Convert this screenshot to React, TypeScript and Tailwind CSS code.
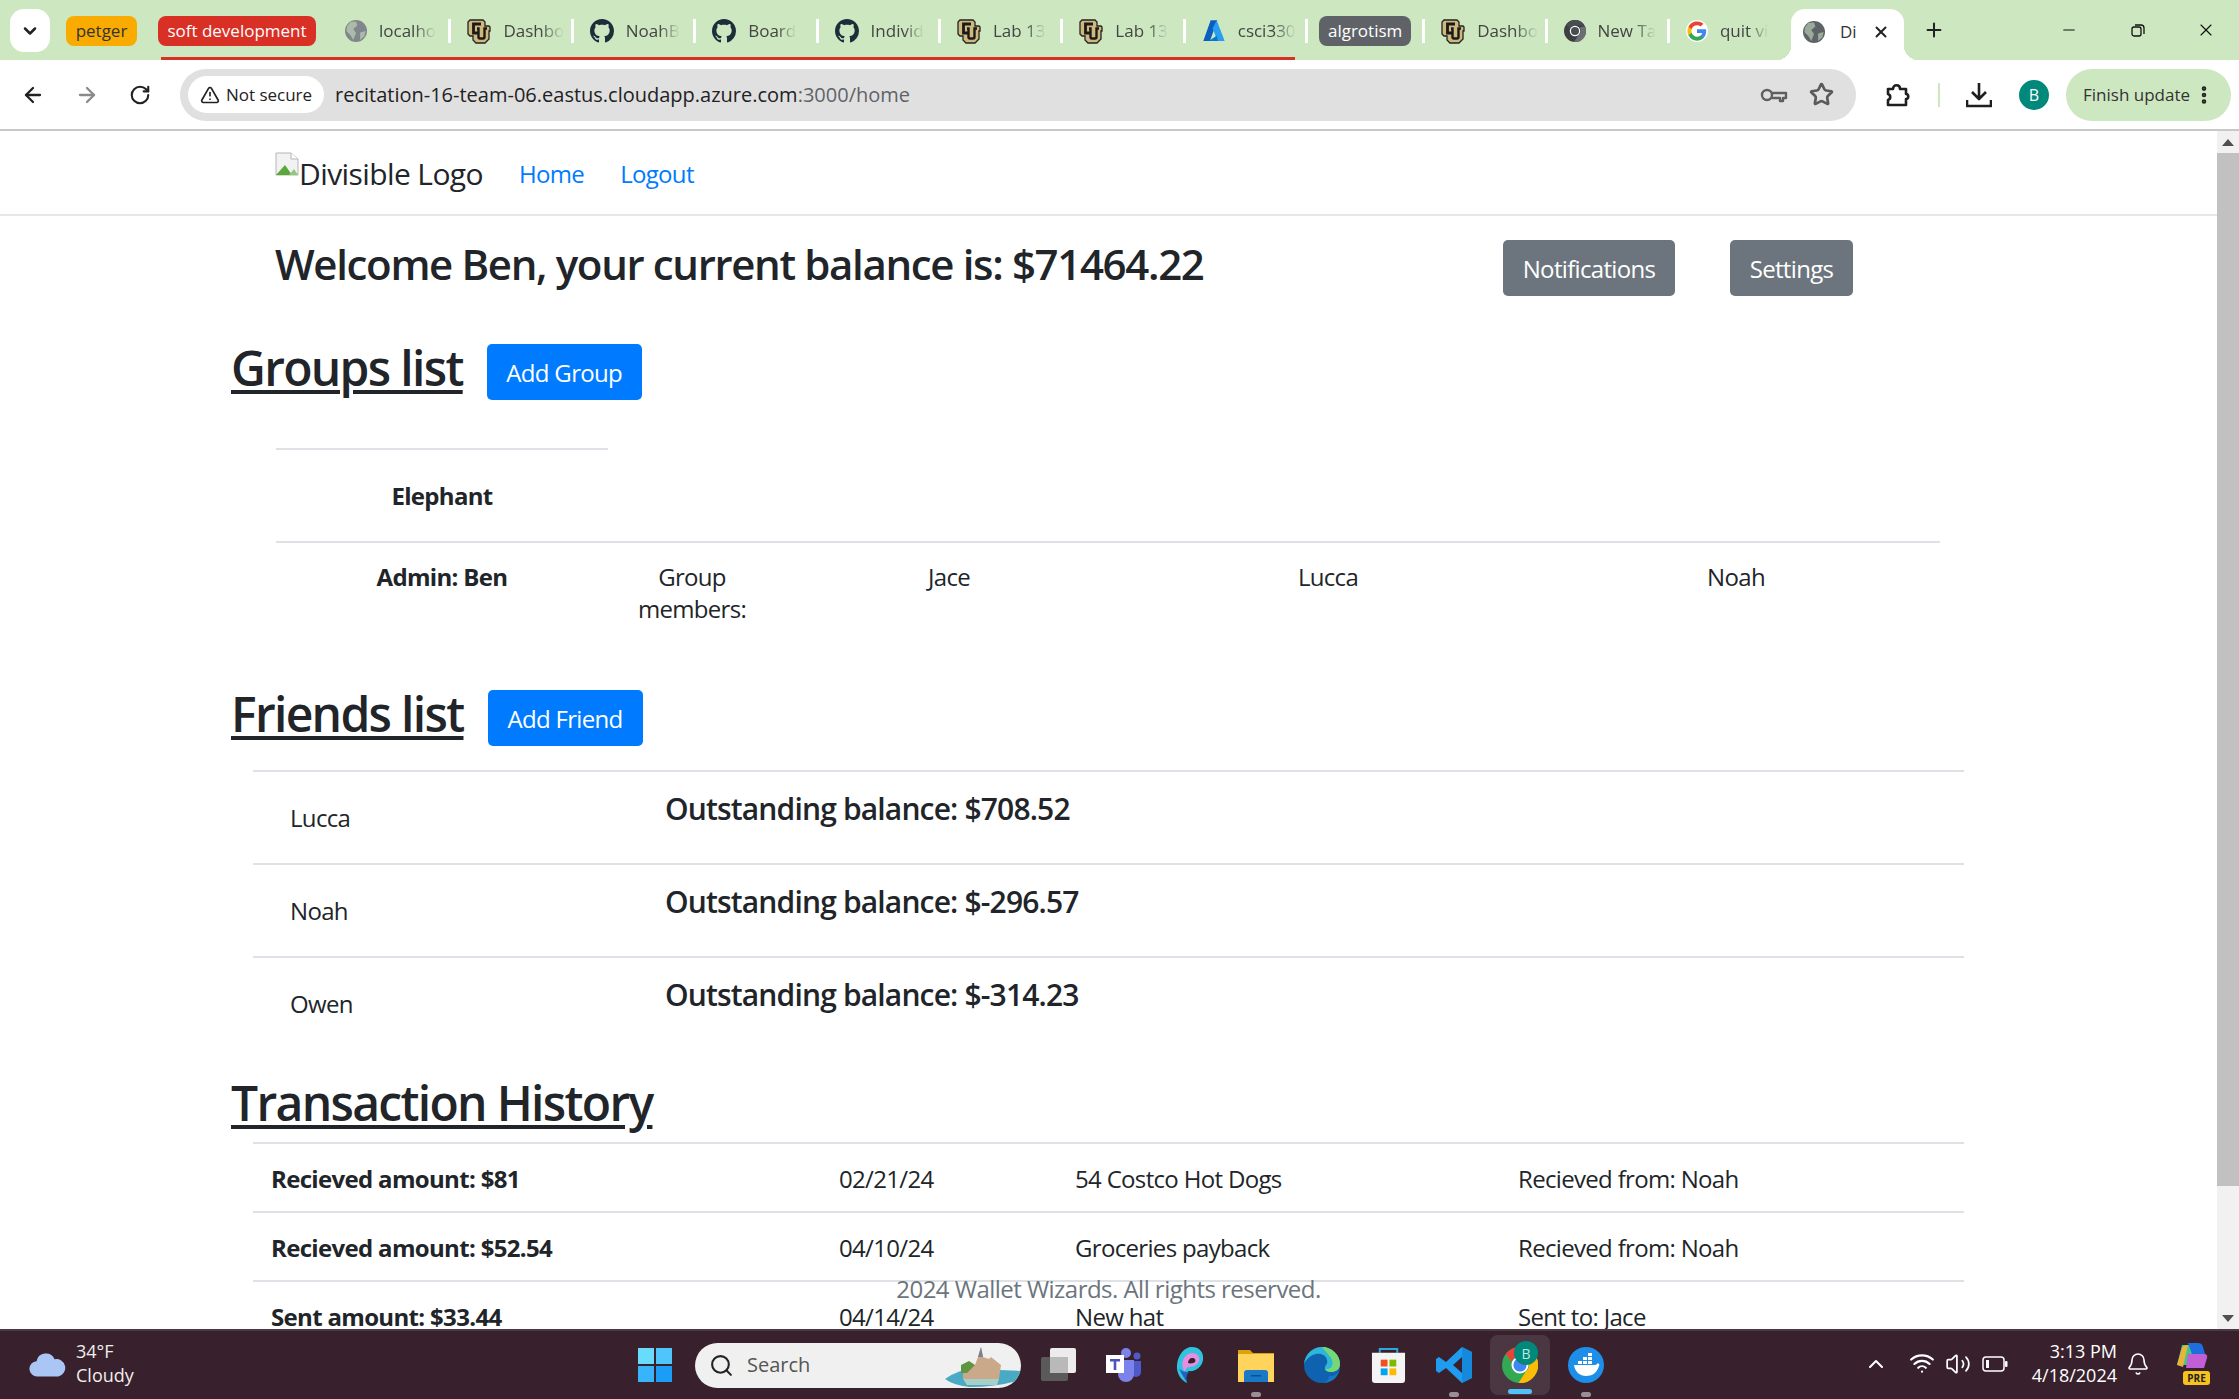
import React from 'react';
import { ArrowLeft, ArrowRight, RotateCw, TriangleAlert, Star, EllipsisVertical, ChevronDown, Plus, X, Minus, Search, ChevronUp, Wifi, Volume2, Bell } from 'lucide-react';

const FONT = 'font-["Open_Sans",sans-serif]';

function Globe({ color = '#5f6368' }: { color?: string }) {
  return (
    <svg viewBox="0 0 16 16" className="w-[22px] h-[22px] shrink-0">
      <circle cx="8" cy="8" r="8" fill={color} />
      <path d="M4 1.5 L8 1 L9 4 L6 6.5 L8 9.5 L6 14.5 L4 11 L1 8 L1.5 4.5 Z M11 9 L15 8 L14 12 L11 14.5 Z" fill="#cde8c1" opacity="0.55" />
    </svg>
  );
}

function Cu() {
  return (
    <svg viewBox="0 0 24 26" className="w-[24px] h-[26px] shrink-0">
      <path d="M3 2h13l2 2v4h4l1 1v4h-1v8l-4 4H9l-3-3v-4H3l-2-2V4z" fill="#cfb87c" stroke="#222" strokeWidth="1.3" />
      <path d="M14 6H6.500v9H12" fill="none" stroke="#1a1a1a" strokeWidth="2.800" />
      <path d="M10 10.500h1.500V19a1.500 1.500 0 0 0 1.500 1.500h3a1.500 1.500 0 0 0 1.500-1.500V10.500H20" fill="none" stroke="#1a1a1a" strokeWidth="2.400" />
    </svg>
  );
}

function GitHub() {
  return (
    <svg viewBox="0 0 16 16" className="w-[24px] h-[24px] shrink-0" fill="#1f2d3a">
      <path d="M8 0C3.58 0 0 3.58 0 8c0 3.54 2.29 6.53 5.47 7.59.4.07.55-.17.55-.38 0-.19-.01-.82-.01-1.49-2.01.37-2.53-.49-2.69-.94-.09-.23-.48-.94-.82-1.13-.28-.15-.68-.52-.01-.53.63-.01 1.08.58 1.23.82.72 1.21 1.87.87 2.33.66.07-.52.28-.87.51-1.07-1.78-.2-3.64-.89-3.64-3.95 0-.87.31-1.59.82-2.15-.08-.2-.36-1.02.08-2.12 0 0 .67-.21 2.2.82.64-.18 1.32-.27 2-.27s1.36.09 2 .27c1.53-1.04 2.2-.82 2.2-.82.44 1.1.16 1.92.08 2.12.51.56.82 1.27.82 2.15 0 3.07-1.87 3.75-3.65 3.95.29.25.54.73.54 1.48 0 1.07-.01 1.93-.01 2.2 0 .21.15.46.55.38A8.01 8.01 0 0 0 16 8c0-4.42-3.58-8-8-8z" />
    </svg>
  );
}

function AzureIcon() {
  return (
    <svg viewBox="0 0 18 18" className="w-[24px] h-[24px] shrink-0">
      <path d="M6.5 1h5L6 16.5H1z" fill="#0a5ebd" />
      <path d="M11 1l6 15.5h-5.5L8 7z" fill="#2b9df0" />
      <path d="M5 16.5l6-4 1 4z" fill="#0078d4" />
    </svg>
  );
}

function ChromeIcon({ size = 22, dark = false }: { size?: number; dark?: boolean }) {
  const a = dark ? '#4a4d50' : '#ea4335';
  const b = dark ? '#3c4043' : '#34a853';
  const c = dark ? '#6b6f73' : '#fbbc05';
  return (
    <svg viewBox="0 0 24 24" width={size} height={size} className="shrink-0">
      <circle cx="12" cy="12" r="12" fill={b} />
      <path d="M12 0a12 12 0 0 1 10.4 6H12a6 6 0 0 0-5.6 3.8L2.5 4.7A12 12 0 0 1 12 0z" fill={a} />
      <path d="M23 7A12 12 0 0 1 11 24l5-7.8A6 6 0 0 0 17 8z" fill={c} />
      <circle cx="12" cy="12" r="5.7" fill="#fff" />
      <circle cx="12" cy="12" r="4.4" fill={dark ? '#4a4d50' : '#4285f4'} />
    </svg>
  );
}

function GoogleIcon() {
  return (
    <svg viewBox="0 0 24 24" className="w-[22px] h-[22px] shrink-0">
      <circle cx="12" cy="12" r="12" fill="#fff" />
      <path d="M22 12.2c0-.7-.1-1.4-.2-2H12v3.9h5.6a4.8 4.8 0 0 1-2.1 3.1v2.6h3.4c2-1.8 3.1-4.5 3.1-7.6z" fill="#4285f4" />
      <path d="M12 22.5c2.8 0 5.2-.9 6.9-2.6l-3.4-2.6c-.9.6-2.1 1-3.5 1-2.7 0-5-1.8-5.8-4.3H2.7v2.7a10.5 10.5 0 0 0 9.3 5.8z" fill="#34a853" />
      <path d="M6.2 14a6.3 6.3 0 0 1 0-4V7.3H2.7a10.5 10.5 0 0 0 0 9.4z" fill="#fbbc05" />
      <path d="M12 5.7c1.5 0 2.9.5 4 1.5l3-3A10.5 10.5 0 0 0 2.7 7.3L6.2 10c.8-2.5 3.1-4.3 5.8-4.3z" fill="#ea4335" />
    </svg>
  );
}

function Tab({ icon, label, sep = true }: { icon: React.ReactNode; label: string; sep?: boolean }) {
  return (
    <div className="w-[122.4px] h-[31px] flex items-center pl-[16px] shrink-0 relative">
      {icon}
      <span className="ml-[12px] w-fit text-[17px] text-[#444] whitespace-nowrap [mask-image:linear-gradient(to_right,black_62%,transparent)]">{label}</span>
      {sep && <div className="absolute right-0 top-[4px] w-[3px] h-[24px] bg-white" />}
    </div>
  );
}

function Pill({ color, text, w }: { color: string; text: string; w: string }) {
  return (
    <div className={`h-[30px] ${w} ${color} rounded-[8px] text-[17px] flex items-center justify-center whitespace-nowrap shrink-0`}>
      {text}
    </div>
  );
}

function TitleBar() {
  return (
    <div className="h-[60px] bg-[#cde8c1] flex items-start shrink-0 relative">
      <div className="ml-[10px] mt-[9px] w-[40px] h-[43px] bg-white rounded-[14px] flex items-center justify-center shrink-0">
        <ChevronDown className="w-[20px] h-[20px] text-[#222]" strokeWidth={3} />
      </div>
      <div className="flex items-center mt-[15px] ml-[16px]">
        <Pill color="bg-[#f9ab00] text-[#333]" text="petger" w="w-[71px]" />
        <div className="w-[21px]" />
        <Pill color="bg-[#d93025] text-white" text="soft development" w="w-[158px]" />
        <div className="w-[13px]" />
        <Tab icon={<Globe color="#80868b" />} label="localho" />
        <Tab icon={<Cu />} label="Dashbo" />
        <Tab icon={<GitHub />} label="NoahB" />
        <Tab icon={<GitHub />} label="Board" />
        <Tab icon={<GitHub />} label="Individ" />
        <Tab icon={<Cu />} label="Lab 13" />
        <Tab icon={<Cu />} label="Lab 13" />
        <Tab icon={<AzureIcon />} label="csci330" />
        <div className="w-[11px]" />
        <Pill color="bg-[#5f6368] text-white" text="algrotism" w="w-[92px]" />
        <div className="w-[11px]" />
        <div className="w-[3px] h-[24px] bg-white" />
        <Tab icon={<Cu />} label="Dashbo" />
        <Tab icon={<ChromeIcon dark />} label="New Ta" />
        <Tab icon={<GoogleIcon />} label="quit vi" sep={false} />
      </div>
      <div className="absolute left-[1791px] top-[9px] w-[113px] h-[51px] bg-white rounded-t-[14px] flex items-center pl-[12px] pb-[6px]">
        <Globe />
        <span className="ml-[15px] text-[17px] text-[#333] w-[24px]">Di</span>
        <X className="w-[18px] h-[18px] text-[#222] ml-[8px]" strokeWidth={2.6} />
      </div>
      <div className="absolute left-[1777px] top-[46px] w-[14px] h-[14px] bg-[radial-gradient(circle_at_0_0,transparent_14px,white_14px)]" />
      <div className="absolute left-[1904px] top-[46px] w-[14px] h-[14px] bg-[radial-gradient(circle_at_100%_0,transparent_14px,white_14px)]" />
      <Plus className="absolute left-[1923px] top-[19px] w-[22px] h-[22px] text-[#222]" strokeWidth={2.2} />
      <Minus className="absolute left-[2060px] top-[21px] w-[18px] h-[18px] text-[#111]" strokeWidth={1.5} />
      <svg viewBox="0 0 16 16" className="absolute left-[2130px] top-[22px] w-[16px] h-[16px]" fill="none" stroke="#111" strokeWidth="1.3">
        <rect x="2" y="5" width="9" height="9" rx="2" />
        <path d="M5 3h6a3 3 0 0 1 3 3v6" />
      </svg>
      <X className="absolute left-[2196px] top-[20px] w-[20px] h-[20px] text-[#111]" strokeWidth={1.4} />
      <div className="absolute left-[161px] top-[57px] w-[1134px] h-[3px] bg-[#d93025]" />
    </div>
  );
}

function ToolBar() {
  return (
    <div className="h-[69px] bg-white border-b-2 border-[#c8c8c8] flex items-center shrink-0 box-content">
      <ArrowLeft className="ml-[21px] w-[24px] h-[24px] text-[#222]" strokeWidth={2.3} />
      <ArrowRight className="ml-[30px] w-[24px] h-[24px] text-[#8a8a8a]" strokeWidth={2.3} />
      <RotateCw className="ml-[30px] w-[22px] h-[22px] text-[#222]" strokeWidth={2.3} />
      <div className="ml-[29px] w-[1676px] h-[52px] rounded-full bg-[#e0e0e0] flex items-center pl-[8px] pr-[22px]">
        <div className="h-[37px] w-[136px] bg-white rounded-full flex items-center justify-center gap-[6px]">
          <TriangleAlert className="w-[20px] h-[20px] text-[#222]" strokeWidth={2} />
          <span className="text-[17px] font-medium text-[#222]">Not secure</span>
        </div>
        <span className="ml-[11px] text-[20px] text-[#222] whitespace-nowrap">
          recitation-16-team-06.eastus.cloudapp.azure.com<span className="text-[#5f6368]">:3000/home</span>
        </span>
        <div className="flex-1" />
        <svg viewBox="0 0 28 16" className="w-[28px] h-[16px] shrink-0" fill="none" stroke="#5f5f5f" strokeWidth="2.4">
          <circle cx="7" cy="8" r="5" />
          <path d="M12 6h14v5h-3v3h-3v-3h-8" strokeLinejoin="round" />
        </svg>
        <Star className="ml-[21px] w-[25px] h-[25px] text-[#5a5a5a]" strokeWidth={2.6} />
      </div>
      <svg viewBox="0 0 26 26" className="ml-[29px] w-[26px] h-[26px] shrink-0" fill="none" stroke="#1f1f1f" strokeWidth="2.6" strokeLinejoin="round">
        <path d="M3 7h5c0-5 7-5 7 0h6v5c3 0 3 5 0 5v6H3v-5c3-1 3-5 0-6z" />
      </svg>
      <div className="ml-[27px] w-[2px] h-[24px] bg-[#cde8c1]" />
      <svg viewBox="0 0 26 26" className="ml-[26px] w-[26px] h-[26px] shrink-0" fill="none" stroke="#1f1f1f" strokeWidth="2.6" strokeLinejoin="round">
        <path d="M13 1v15M6 10l7 7 7-7M1 18v6h24v-6" />
      </svg>
      <div className="ml-[27px] w-[30px] h-[30px] rounded-full bg-[#00897b] text-white text-[16px] flex items-center justify-center">B</div>
      <div className="ml-[17px] w-[165px] h-[52px] rounded-full bg-[#cde8c1] flex items-center pl-[17px]">
        <span className="text-[17px] text-[#333] whitespace-nowrap">Finish update</span>
        <EllipsisVertical className="ml-[3px] w-[22px] h-[22px] text-[#222]" strokeWidth={3} />
      </div>
    </div>
  );
}

function PageButton({ text, color, w }: { text: string; color: string; w: string }) {
  return (
    <div className={`h-[56px] ${w} ${color} pt-[2px] rounded-[5px] text-white text-[24px] flex items-center justify-center whitespace-nowrap shrink-0`}>
      {text}
    </div>
  );
}

function SectionTitle({ title, children }: { title: string; children?: React.ReactNode }) {
  return (
    <div className="flex items-center pl-[231px] h-[56px] gap-[24px]">
      <h2 className="pb-[8px] text-[48px] font-semibold tracking-[-0.035em] text-[#212529] underline decoration-[4px] underline-offset-[4px] whitespace-nowrap">{title}</h2>
      {children}
    </div>
  );
}

const friends = [
  { name: 'Lucca', balance: 'Outstanding balance: $708.52' },
  { name: 'Noah', balance: 'Outstanding balance: $-296.57' },
  { name: 'Owen', balance: 'Outstanding balance: $-314.23' },
];

const transactions = [
  { amount: 'Recieved amount: $81', date: '02/21/24', desc: '54 Costco Hot Dogs', who: 'Recieved from: Noah' },
  { amount: 'Recieved amount: $52.54', date: '04/10/24', desc: 'Groceries payback', who: 'Recieved from: Noah' },
  { amount: 'Sent amount: $33.44', date: '04/14/24', desc: 'New hat', who: 'Sent to: Jace' },
];

function PageContent() {
  return (
    <div className="flex-1 relative overflow-hidden bg-white text-[#212529] text-[24px] tracking-[-0.028em]">
      <nav className="h-[85px] border-b-2 border-[#e7e7e7] flex items-center pl-[275px] pt-[2px]">
        <svg viewBox="0 0 24 24" className="w-[24px] h-[24px] -mt-[20px] shrink-0">
          <path d="M1 1h15l7 6v16H1z" fill="#f2f2f2" stroke="#b5b5b5" />
          <path d="M1 23l9-10 7 10z" fill="#5aa83c" />
          <path d="M14 23l5-6 4 6z" fill="#8fc97a" />
          <path d="M16 1v6h7" fill="#fff" stroke="#b5b5b5" />
        </svg>
        <span className="text-[30px] tracking-[-0.02em] whitespace-nowrap">Divisible Logo</span>
        <a className="ml-[36px] text-[#007bff]">Home</a>
        <a className="ml-[36px] text-[#007bff]">Logout</a>
      </nav>
      <div className="flex items-center pl-[275px] mt-[24px]">
        <h3 className="text-[42px] font-semibold tracking-[-0.032em] w-[1228px] whitespace-nowrap -mt-[10px]">Welcome Ben, your current balance is: $71464.22</h3>
        <PageButton text="Notifications" color="bg-[#6c757d]" w="w-[172px]" />
        <div className="w-[55px]" />
        <PageButton text="Settings" color="bg-[#6c757d]" w="w-[123px]" />
      </div>
      <div className="mt-[48px]">
        <SectionTitle title="Groups list">
          <PageButton text="Add Group" color="bg-[#007bff]" w="w-[155px]" />
        </SectionTitle>
      </div>
      <div className="ml-[276px] w-[1664px] mt-[48px]">
        <div className="w-[332px] h-[93px] border-t-2 border-[#dee2e6] flex items-center justify-center font-bold">Elephant</div>
        <div className="h-[149px] border-t-2 border-[#dee2e6] grid grid-cols-[332px_168px_346px_412px_404px] pt-[18px] text-center leading-[32px]">
          <div className="font-bold">Admin: Ben</div>
          <div>Group<br />members:</div>
          <div>Jace</div>
          <div>Lucca</div>
          <div>Noah</div>
        </div>
      </div>
      <SectionTitle title="Friends list">
        <PageButton text="Add Friend" color="bg-[#007bff]" w="w-[155px]" />
      </SectionTitle>
      <div className="ml-[253px] w-[1711px] mt-[24px]">
        {friends.map((f) => (
          <div key={f.name} className="h-[93px] border-t-2 border-[#dee2e6] flex">
            <div className="w-[412px] pl-[37px] pt-[28px]">{f.name}</div>
            <div className="text-[30px] font-semibold tracking-[-0.028em] pt-[14px] whitespace-nowrap">{f.balance}</div>
          </div>
        ))}
      </div>
      <div className="mt-[30px]">
        <SectionTitle title="Transaction History" />
      </div>
      <div className="ml-[253px] w-[1711px] mt-[7px]">
        {transactions.map((t) => (
          <div key={t.amount} className="h-[69px] pt-[2px] border-t-2 border-[#dee2e6] flex items-center whitespace-nowrap">
            <div className="w-[586px] pl-[18px] font-bold">{t.amount}</div>
            <div className="w-[236px]">{t.date}</div>
            <div className="w-[443px]">{t.desc}</div>
            <div>{t.who}</div>
          </div>
        ))}
      </div>
      <div className="absolute left-0 right-0 top-[1140px] text-center tracking-[-0.022em] text-[#6c757d]">2024 Wallet Wizards. All rights reserved.</div>
    </div>
  );
}

function ScrollBar() {
  return (
    <div className="w-[22px] bg-[#f1f1f1] flex flex-col items-center shrink-0">
      <div className="h-[22px] flex items-center justify-center">
        <div className="w-0 h-0 border-x-[6px] border-x-transparent border-b-[7px] border-b-[#505050]" />
      </div>
      <div className="w-full h-[1033px] bg-[#c1c1c1]" />
      <div className="flex-1" />
      <div className="h-[22px] flex items-center justify-center">
        <div className="w-0 h-0 border-x-[6px] border-x-transparent border-t-[7px] border-t-[#505050]" />
      </div>
    </div>
  );
}

function TaskIcon({ children, dot, active }: { children: React.ReactNode; dot?: boolean; active?: boolean }) {
  return (
    <div className="w-[66px] h-[60px] relative flex items-center justify-center shrink-0">
      {active && <div className="absolute left-[3px] top-0 w-[60px] h-[60px] rounded-[8px] bg-[#4b3742]" />}
      <div className="relative flex items-center justify-center">{children}</div>
      {dot && <div className="absolute bottom-[-2px] left-[28px] w-[10px] h-[5px] rounded-full bg-[#9a8f95]" />}
      {active && <div className="absolute bottom-[1px] left-[21px] w-[24px] h-[5px] rounded-full bg-[#4fc3f7]" />}
    </div>
  );
}

function TaskBar() {
  return (
    <div className="h-[70px] bg-[#38212c] border-t-2 border-[#4a3a42] flex items-center shrink-0 relative text-white">
      <svg viewBox="0 0 40 30" className="ml-[28px] w-[38px] h-[30px] shrink-0">
        <path d="M10 27a8 8 0 0 1-1-16 10 10 0 0 1 19-2 8 8 0 0 1 4 18z" fill="#a9c6f5" />
      </svg>
      <div className="ml-[10px] -mt-[5px] text-[18px] leading-[24px] text-[#eee] w-[100px]">
        <div>34°F</div>
        <div>Cloudy</div>
      </div>
      <div className="ml-[462px] grid grid-cols-2 gap-[2px] w-[34px] h-[34px] shrink-0">
        <div className="bg-[#6adcfb]" />
        <div className="bg-[#4fc6fb]" />
        <div className="bg-[#37b4fa]" />
        <div className="bg-[#1a9cf7]" />
      </div>
      <div className="ml-[23px] w-[326px] h-[45px] rounded-full bg-[#f0f0f0] flex items-center pl-[14px] shrink-0 relative overflow-hidden">
        <Search className="w-[25px] h-[25px] text-[#222]" strokeWidth={2} />
        <span className="ml-[13px] text-[20px] text-[#555]">Search</span>
        <svg viewBox="0 0 76 44" className="absolute right-0 top-0 w-[76px] h-[44px]">
          <path d="M0 36 Q14 26 30 26 L76 28 L72 38 Q50 44 24 44 Q8 42 0 36z" fill="#4aa9c4" />
          <path d="M36 4 L38 14 L44 16 L46 14 L56 22 L54 36 L18 36 L18 24 L30 22 L33 14z" fill="#c9a98a" />
          <path d="M36 4 L38 14 L33 14z" fill="#7a7f96" />
          <path d="M16 30 L16 22 L24 18 L30 22 L22 30z" fill="#5f9440" />
          <path d="M18 36 L54 36 L52 42 L22 42z" fill="#a9cfc9" />
        </svg>
      </div>
      <div className="ml-[4px] flex items-center">
        <TaskIcon>
          <svg viewBox="0 0 36 36" className="w-[36px] h-[36px]">
            <rect x="1" y="10" width="27" height="24" rx="2" fill="#5a5a5a" />
            <rect x="10" y="1" width="26" height="25" rx="2" fill="#ececec" />
            <rect x="10" y="10" width="18" height="16" fill="#b9b9b9" />
          </svg>
        </TaskIcon>
        <TaskIcon>
          <svg viewBox="0 0 36 36" className="w-[36px] h-[36px]">
            <circle cx="31" cy="9" r="3.5" fill="#5059c9" />
            <path d="M25 14h10v11a5 5 0 0 1-10 0z" fill="#5059c9" />
            <circle cx="20" cy="6" r="5" fill="#7b83eb" />
            <path d="M12 13h16v14a8 8 0 0 1-16 0z" fill="#7b83eb" />
            <rect x="0" y="8" width="18" height="18" fill="#fff" />
            <path d="M4 12h10v2.5h-3.7V23H7.7v-8.500H4z" fill="#4b53bc" />
          </svg>
        </TaskIcon>
        <TaskIcon>
          <svg viewBox="0 0 28 38" className="w-[28px] h-[38px]">
            <path d="M16 1c8 0 12 6 11 13s-8 12-14 11c-3 1-4 4-3 8l1 4C6 35 0 28 1 19 2 9 8 1 16 1z" fill="#2fc3e0" />
            <path d="M16 7c6 0 8 4 7 8-2 5-7 6-11 6-2 1-3 3-3 5-3-4-3-9-2-12 2-4 5-7 9-7z" fill="#e78ee0" />
            <path d="M16 12c3 0 4 2 3 4-1 1-4 2-7 1 0-3 2-5 4-5z" fill="#38212c" />
            <path d="M3 22c2 6 5 9 8 15 -1-4-1-8 2-11-5 0-8-1-10-4z" fill="#1e63c4" />
          </svg>
        </TaskIcon>
        <TaskIcon dot>
          <svg viewBox="0 0 36 34" className="w-[36px] h-[34px]">
            <path d="M0 2h12l3 3h21v29H0z" fill="#dca10e" />
            <rect x="0" y="6" width="36" height="28" fill="#ffd45c" />
            <path d="M6 25a3 3 0 0 1 3-3h18a3 3 0 0 1 3 3v9H6z" fill="#1a78c9" />
            <rect x="13" y="27" width="10" height="1.5" fill="#0d4f8f" />
          </svg>
        </TaskIcon>
        <TaskIcon>
          <svg viewBox="0 0 36 36" className="w-[36px] h-[36px]">
            <circle cx="18" cy="18" r="18" fill="#0f62b0" />
            <path d="M0 17C1 7 9 0 18 0c10 0 18 8 18 17 0 6-5 8-9 8-5 0-7-3-6-5 1-3 3-3 2-7-1-5-6-7-11-6C7 8 2 12 0 17z" fill="#2fb5d8" />
            <path d="M18 0c10 0 18 8 18 17 0 6-5 8-9 8-3 0-5-1-6-3 8 1 9-6 6-11-2-3-5-6-9-11z" fill="#7fd96b" opacity="0.9" />
            <path d="M36 22c-2 9-9 14-17 14 4-1 6-4 6-7 5 1 9-2 11-7z" fill="#1777c8" />
          </svg>
        </TaskIcon>
        <TaskIcon>
          <svg viewBox="0 0 36 36" className="w-[35px] h-[35px]">
            <path d="M9 5V1h18v4" fill="none" stroke="#2aa8e0" strokeWidth="2" />
            <path d="M1 5h34v28a3 3 0 0 1-3 3H4a3 3 0 0 1-3-3z" fill="#f4f4f4" />
            <rect x="10" y="12" width="7" height="7" fill="#f25022" />
            <rect x="19" y="12" width="7" height="7" fill="#7fba00" />
            <rect x="10" y="21" width="7" height="7" fill="#00a4ef" />
            <rect x="19" y="21" width="7" height="7" fill="#ffb900" />
          </svg>
        </TaskIcon>
        <TaskIcon dot>
          <svg viewBox="0 0 36 36" className="w-[36px] h-[36px]">
            <path d="M26 0l10 5v26l-10 5-16-15-7 5-3-2V12l3-2 7 5zM26 10l-9 8 9 8z" fill="#1f9cf0" />
            <path d="M26 0l10 5v26l-10 5z" fill="#0f7fd0" opacity="0.6" />
          </svg>
        </TaskIcon>
        <TaskIcon active>
          <ChromeIcon size={36} />
          <div className="absolute -top-[6px] left-[12px] w-[24px] h-[24px] rounded-full bg-[#00897b] text-[#bfe6df] text-[14px] flex items-center justify-center">B</div>
        </TaskIcon>
        <TaskIcon dot>
          <svg viewBox="0 0 36 36" className="w-[36px] h-[36px]">
            <circle cx="18" cy="18" r="18" fill="#1d8fe8" />
            <path d="M6 18h21c1 0 2-1 3-2 1 1 2 2 1 3-2 7-7 10-13 10-6 0-11-4-12-11z" fill="#fff" />
            <path d="M10 14h4v3h-4zM15 14h4v3h-4zM20 14h4v3h-4zM15 10h4v3h-4zM20 10h4v3h-4zM20 6h4v3h-4z" fill="#fff" />
          </svg>
        </TaskIcon>
      </div>
      <ChevronUp className="absolute left-[1864px] top-[21px] w-[24px] h-[24px]" strokeWidth={2} />
      <Wifi className="absolute left-[1909px] top-[19px] w-[26px] h-[26px]" strokeWidth={2} />
      <Volume2 className="absolute left-[1945px] top-[20px] w-[26px] h-[26px]" strokeWidth={1.6} />
      <svg viewBox="0 0 26 16" className="absolute left-[1982px] top-[25px] w-[26px] h-[16px]" fill="none" stroke="#fff" strokeWidth="1.5">
        <rect x="1" y="1" width="21" height="14" rx="3" />
        <rect x="4" y="4" width="3" height="8" fill="#fff" stroke="none" />
        <rect x="23" y="5" width="2.500" height="6" rx="1" fill="#fff" stroke="none" />
      </svg>
      <div className="absolute right-[122px] top-[8px] text-right text-[18px] leading-[24px] whitespace-nowrap">
        <div>3:13 PM</div>
        <div>4/18/2024</div>
      </div>
      <Bell className="absolute left-[2126px] top-[21px] w-[24px] h-[24px]" strokeWidth={1.6} />
      <svg viewBox="0 0 36 36" className="absolute left-[2174px] top-[11px] w-[36px] h-[36px]">
        <path d="M8 3h16l4 20H3z" fill="#45c38f" />
        <path d="M14 1h10q4 0 5 4l2 7H18z" fill="#1f6ee0" />
        <path d="M3 23L8 6q1-3 6-3L9 25z" fill="#e8b53a" />
        <path d="M14 12h16q4 0 3 4l-3 10H12z" fill="#c35fd6" />
      </svg>
      <div className="absolute left-[2183px] top-[40px] w-[27px] h-[14px] rounded-[3px] bg-[#f7c21e] text-[10px] leading-[14px] font-bold text-[#222] text-center">PRE</div>
    </div>
  );
}

export default function App() {
  return (
    <div className={`w-[2239px] h-[1399px] flex flex-col overflow-hidden ${FONT}`}>
      <TitleBar />
      <ToolBar />
      <div className="flex-1 flex min-h-0">
        <PageContent />
        <ScrollBar />
      </div>
      <TaskBar />
    </div>
  );
}
